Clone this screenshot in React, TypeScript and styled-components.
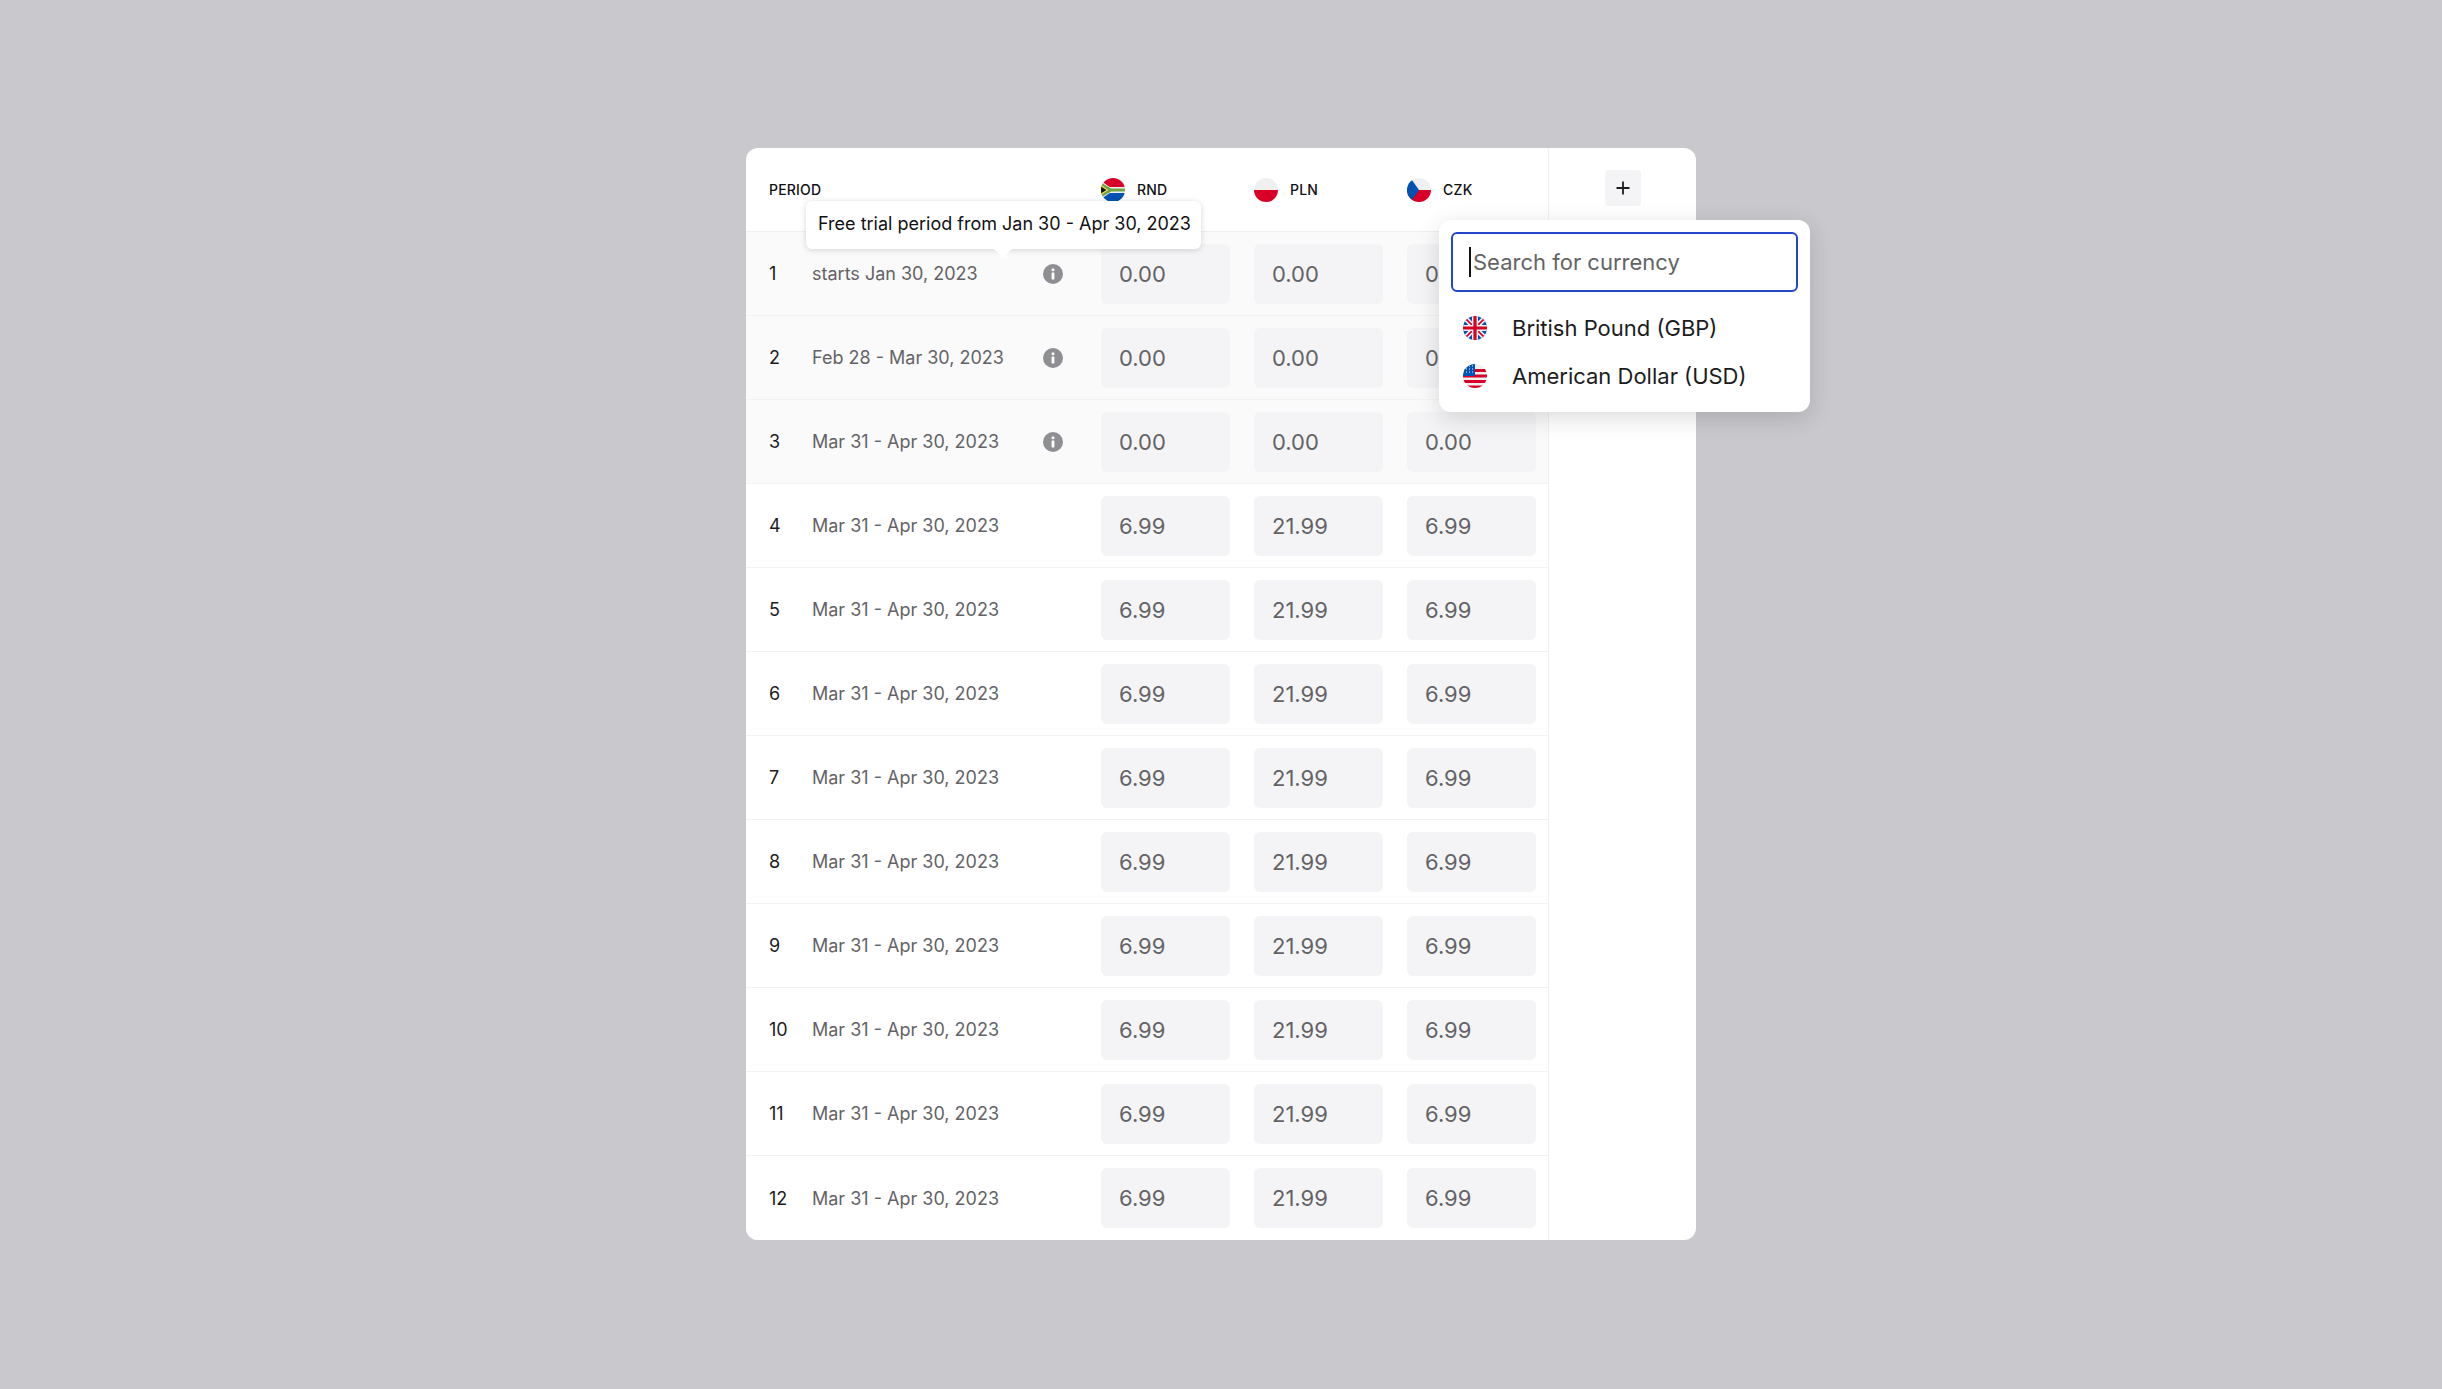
import React from "react";
import styled, { createGlobalStyle } from "styled-components";

const Global = createGlobalStyle`
  html, body { margin: 0; padding: 0; background: #c8c8cd; }
  body { font-family: Inter, "Liberation Sans", sans-serif; -webkit-font-smoothing: antialiased; }
`;

const Page = styled.div`
  min-height: 1389px;
  box-sizing: border-box;
  padding-top: 148px;
  display: flex;
  justify-content: center;
  align-items: flex-start;
`;
const Card = styled.div`
  position: relative;
  width: 950px;
  height: 1092px;
  background: #fff;
  border-radius: 12px;
  display: flex;
`;
const TableArea = styled.div`
  width: 803px;
  box-sizing: border-box;
  border-right: 1px solid #f0f0f2;
  display: flex;
  flex-direction: column;
`;
const AddColumn = styled.div`
  flex: 1;
  height: 84px;
  display: flex;
  align-items: center;
  justify-content: center;
  padding-bottom: 4px;
  box-sizing: border-box;
`;
const AddButton = styled.button`
  width: 36px;
  height: 36px;
  padding: 0;
  border: 0;
  border-radius: 4px;
  background: #f4f4f6;
  color: #1c1c1e;
  display: flex;
  align-items: center;
  justify-content: center;
`;
const HeaderRow = styled.div`
  height: 84px;
  box-sizing: border-box;
  border-bottom: 1px solid #f0f0f2;
  padding: 0 12px 0 23px;
  display: flex;
  align-items: center;
`;
const PeriodLabel = styled.div`
  flex: 1;
  font-size: 14px;
  font-weight: 500;
  letter-spacing: 0.2px;
  color: #111114;
`;
const CurrencyHead = styled.div`
  width: 129px;
  display: flex;
  align-items: center;
  gap: 12px;
  margin-left: 24px;
  font-size: 14px;
  font-weight: 500;
  letter-spacing: 0.2px;
  color: #111114;
  &:first-of-type { margin-left: 0; }
`;
const FlagSvg = styled.svg`
  width: 24px;
  height: 24px;
  flex: none;
  display: block;
`;
const Row = styled.div<{ $muted: boolean; $last: boolean }>`
  height: 84px;
  box-sizing: border-box;
  padding: 0 12px 0 23px;
  display: flex;
  align-items: center;
  background: ${(p) => (p.$muted ? "#fafafa" : "#fff")};
  border-bottom: ${(p) => (p.$last ? "0" : "1px solid #f3f3f5")};
  border-bottom-left-radius: ${(p) => (p.$last ? "12px" : "0")};
`;
const RowNum = styled.div`
  width: 43px;
  flex: none;
  font-size: 18px;
  color: #1c1c1e;
`;
const RowDate = styled.div`
  flex: 1;
  font-size: 18px;
  color: #636366;
`;
const InfoSlot = styled.div`
  width: 58px;
  flex: none;
  display: flex;
  align-items: center;
`;
const Inputs = styled.div`
  display: flex;
  gap: 24px;
`;
const Amount = styled.div`
  width: 129px;
  height: 60px;
  box-sizing: border-box;
  padding-left: 18px;
  border-radius: 6px;
  background: #f4f4f6;
  color: #636366;
  font-size: 22px;
  line-height: 60px;
`;
const Tooltip = styled.div`
  position: absolute;
  left: 60px;
  top: 53px;
  width: 395px;
  height: 48px;
  box-sizing: border-box;
  padding-left: 12px;
  background: #fff;
  border-radius: 6px;
  box-shadow: 0 1px 6px rgba(0, 0, 0, 0.16);
  font-size: 18px;
  line-height: 46px;
  color: #111114;
  white-space: nowrap;
  &::after {
    content: "";
    position: absolute;
    left: 188px;
    top: 48px;
    border-left: 9px solid transparent;
    border-right: 9px solid transparent;
    border-top: 9px solid #fff;
  }
`;
const Popover = styled.div`
  position: absolute;
  left: 693px;
  top: 72px;
  width: 371px;
  height: 192px;
  box-sizing: border-box;
  padding: 12px;
  background: #fff;
  border-radius: 12px;
  box-shadow: 0 6px 24px rgba(0, 0, 0, 0.14);
`;
const SearchWrap = styled.div`
  position: relative;
  height: 60px;
  margin-bottom: 12px;
`;
const SearchInput = styled.input`
  width: 100%;
  height: 60px;
  box-sizing: border-box;
  border: 2px solid #2347c9;
  border-radius: 6px;
  outline: 0;
  padding: 0 0 0 20px;
  font-family: inherit;
  font-size: 22px;
  background: #fff;
  &::placeholder { color: #636366; opacity: 1; }
`;
const Caret = styled.span`
  position: absolute;
  left: 18px;
  top: 15px;
  width: 1.5px;
  height: 30px;
  background: #111114;
`;
const Option = styled.div`
  height: 48px;
  display: flex;
  align-items: center;
  gap: 25px;
  padding-left: 12px;
  font-size: 22px;
  color: #1c1c1e;
`;

const Circle: React.FC<{ id: string; children: React.ReactNode }> = ({ id, children }) => (
  <FlagSvg viewBox="0 0 24 24">
    <defs>
      <clipPath id={id}>
        <circle cx="12" cy="12" r="12" />
      </clipPath>
    </defs>
    <g clipPath={`url(#${id})`}>{children}</g>
  </FlagSvg>
);

const ZaFlag = () => (
  <Circle id="za">
    <rect width="24" height="24" fill="#f0f0f0" />
    <rect width="24" height="9" fill="#d80027" />
    <rect y="15" width="24" height="9" fill="#0052b4" />
    <path d="M0 3l9.5 6.5H24v5H9.5L0 21z" fill="#f0f0f0" />
    <path d="M0 4.5l10 6H24v3H10l-10 6z" fill="#6da544" />
    <path d="M0 7l7.5 5L0 17z" fill="#ffda44" />
    <path d="M0 8.5L5.4 12 0 15.5z" fill="#111" />
  </Circle>
);
const PlFlag = () => (
  <Circle id="pl">
    <rect width="24" height="12" fill="#f0f0f0" />
    <rect y="12" width="24" height="12" fill="#d80027" />
  </Circle>
);
const CzFlag = () => (
  <Circle id="cz">
    <rect width="24" height="12" fill="#f0f0f0" />
    <rect y="12" width="24" height="12" fill="#d80027" />
    <path d="M0 0h3.5L12 12 3.5 24H0z" fill="#0052b4" />
  </Circle>
);
const GbFlag = () => (
  <Circle id="gb">
    <rect width="24" height="24" fill="#0052b4" />
    <path d="M0 0l24 24M24 0L0 24" stroke="#f0f0f0" strokeWidth="5" />
    <path d="M0 0l24 24M24 0L0 24" stroke="#d80027" strokeWidth="1.6" />
    <path d="M12 0v24M0 12h24" stroke="#f0f0f0" strokeWidth="6" />
    <path d="M12 0v24M0 12h24" stroke="#d80027" strokeWidth="3.2" />
  </Circle>
);
const UsFlag = () => (
  <Circle id="us">
    <rect width="24" height="24" fill="#f0f0f0" />
    <path d="M0 10.5h24v3H0zM0 5h24v3H0zM0 16h24v3H0zM3 21.5h18V24H3z" fill="#d80027" />
    <rect width="12" height="12" fill="#0052b4" />
    <path
      d="M3 7.5h1v1H3zM6 7.5h1v1H6zM9 7.5h1v1H9zM6 4.5h1v1H6zM9 4.5h1v1H9zM9 1.5h1v1H9zM6 1.5h1v1H6zM3 4.5h1v1H3z"
      fill="#f0f0f0"
    />
  </Circle>
);
const InfoIcon = () => (
  <svg width="20" height="20" viewBox="0 0 20 20">
    <circle cx="10" cy="10" r="10" fill="#8e8e93" />
    <circle cx="10" cy="5.8" r="1.5" fill="#fff" />
    <rect x="8.6" y="8.4" width="2.8" height="7" rx="0.6" fill="#fff" />
  </svg>
);
const PlusIcon = () => (
  <svg width="18" height="18" viewBox="0 0 18 18">
    <path d="M9 2.5v13M2.5 9h13" stroke="currentColor" strokeWidth="1.8" fill="none" />
  </svg>
);

const dates = [
  "starts Jan 30, 2023",
  "Feb 28 - Mar 30, 2023",
  ...Array(10).fill("Mar 31 - Apr 30, 2023"),
];

export default function App() {
  return (
    <Page>
      <Global />
      <Card>
        <TableArea>
          <HeaderRow>
            <PeriodLabel>PERIOD</PeriodLabel>
            <CurrencyHead>
              <ZaFlag />
              RND
            </CurrencyHead>
            <CurrencyHead>
              <PlFlag />
              PLN
            </CurrencyHead>
            <CurrencyHead>
              <CzFlag />
              CZK
            </CurrencyHead>
          </HeaderRow>
          {dates.map((d, i) => {
            const free = i < 3;
            return (
              <Row key={i} $muted={free} $last={i === 11}>
                <RowNum>{i + 1}</RowNum>
                <RowDate>{d}</RowDate>
                {free && (
                  <InfoSlot>
                    <InfoIcon />
                  </InfoSlot>
                )}
                <Inputs>
                  <Amount>{free ? "0.00" : "6.99"}</Amount>
                  <Amount>{free ? "0.00" : "21.99"}</Amount>
                  <Amount>{free ? "0.00" : "6.99"}</Amount>
                </Inputs>
              </Row>
            );
          })}
        </TableArea>
        <AddColumn>
          <AddButton>
            <PlusIcon />
          </AddButton>
        </AddColumn>
        <Tooltip>Free trial period from Jan 30 - Apr 30, 2023</Tooltip>
        <Popover>
          <SearchWrap>
            <SearchInput placeholder="Search for currency" />
            <Caret />
          </SearchWrap>
          <Option>
            <GbFlag />
            British Pound (GBP)
          </Option>
          <Option>
            <UsFlag />
            American Dollar (USD)
          </Option>
        </Popover>
      </Card>
    </Page>
  );
}
